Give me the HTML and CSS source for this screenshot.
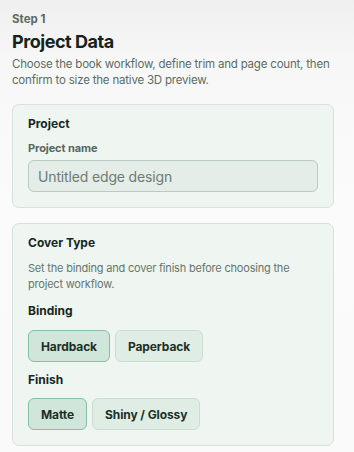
FILE: index.html
```html
<!DOCTYPE html>
<html>
<head>
<meta charset="utf-8">
<link rel="stylesheet" href="styles.css">
</head>
<body>
<main class="page">
  <header class="head">
    <div class="step">Step 1</div>
    <h1 class="title">Project Data</h1>
    <p class="lead">Choose the book workflow, define trim and page count, then confirm to size the native 3D preview.</p>
  </header>

  <section class="card">
    <h2 class="card-title">Project</h2>
    <label class="field-label" for="pname">Project name</label>
    <input id="pname" class="input" type="text" placeholder="Untitled edge design">
  </section>

  <section class="card">
    <h2 class="card-title">Cover Type</h2>
    <p class="card-desc">Set the binding and cover finish before choosing the project workflow.</p>
    <h3 class="group-title">Binding</h3>
    <div class="options">
      <button class="opt selected">Hardback</button>
      <button class="opt">Paperback</button>
    </div>
    <h3 class="group-title group-title-tight">Finish</h3>
    <div class="options">
      <button class="opt selected">Matte</button>
      <button class="opt">Shiny / Glossy</button>
    </div>
  </section>
</main>
</body>
</html>
```

FILE: styles.css
```css
* { box-sizing: border-box; }
html, body { margin: 0; padding: 0; }
body {
  font-family: Inter, "Noto Sans", "Liberation Sans", sans-serif;
  background: linear-gradient(180deg, #efefef 0px, #f7f7f7 60px, #fbfbfb 200px, #fafafa 100%);
  min-height: 452px;
  color: #15231c;
}
.page {
  padding: 12px 20px 6px 12px;
  display: flex;
  flex-direction: column;
}
.head { margin-bottom: 16px; }
.step {
  font-size: 11.5px;
  font-weight: 700;
  color: #5b6b63;
  line-height: 14px;
}
.title {
  margin: 5px 0 0;
  font-size: 18px;
  font-weight: 700;
  line-height: 22px;
  color: #14231b;
  letter-spacing: -0.45px;
}
.lead {
  margin: 3px 0 0;
  font-size: 11.5px;
  line-height: 16px;
  color: #5b6c64;
  letter-spacing: -0.2px;
}
.card {
  background: #eff5f1;
  border: 1px solid #d6e2db;
  border-radius: 7px;
  padding: 11px 15px 15px;
  display: flex;
  flex-direction: column;
  margin-bottom: 15px;
}
.card-title {
  margin: 0;
  font-size: 12px;
  font-weight: 700;
  line-height: 16px;
  color: #17271e;
}
.field-label {
  margin-top: 9px;
  font-size: 11px;
  font-weight: 700;
  line-height: 14px;
  color: #566860;
  letter-spacing: -0.1px;
}
.input {
  margin-top: 5px;
  height: 32px;
  border: 1px solid #b9cbc1;
  border-radius: 6px;
  background: #e4ede7;
  font-family: inherit;
  font-size: 14px;
  letter-spacing: -0.15px;
  padding: 0 9px;
  color: #15231c;
}
.input::placeholder { color: #6e7c75; }
.card-desc {
  margin: 9px 0 0;
  font-size: 11px;
  line-height: 16px;
  color: #66766e;
  letter-spacing: -0.2px;
}
.group-title {
  margin: 11px 0 0;
  font-size: 12px;
  font-weight: 700;
  line-height: 16px;
  color: #17271e;
}
.group-title-tight { margin-top: 10px; }
.options {
  display: flex;
  gap: 5px;
  margin-top: 11px;
}
.group-title-tight + .options { margin-top: 10px; }
.opt {
  height: 32px;
  padding: 0 12px;
  border: 1px solid #c9ddd1;
  border-radius: 6px;
  background: #e0ede5;
  font-family: inherit;
  font-size: 12px;
  font-weight: 700;
  letter-spacing: -0.1px;
  color: #1c3026;
}
.opt.selected {
  background: #d0e6da;
  border-color: #84c0a1;
}
```
